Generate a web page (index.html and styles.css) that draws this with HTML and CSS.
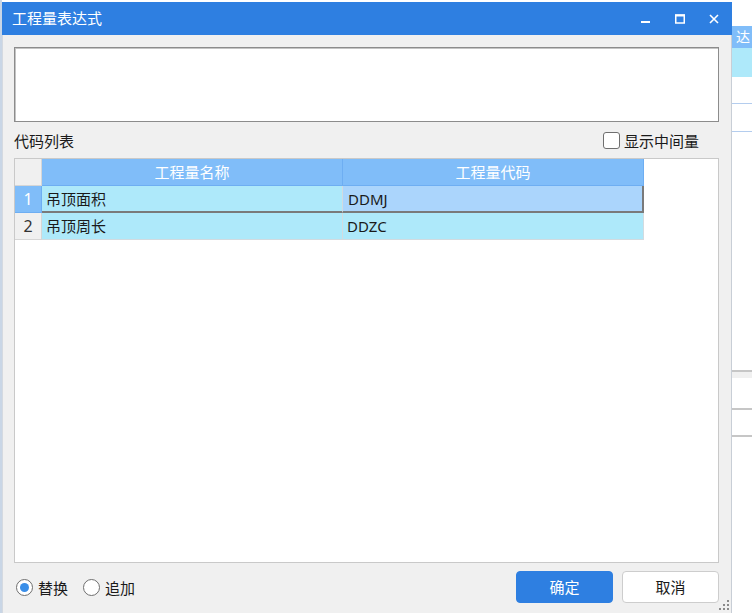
FILE: index.html
```html
<!DOCTYPE html>
<html lang="zh-CN">

<head>
    <meta charset="UTF-8">
    <title>工程量表达式</title>
    <link rel="stylesheet" href="styles.css">
</head>

<body>
    <div id="desk">
        <div id="dialog">
            <div id="titlebar">
                <div class="title">工程量表达式</div>
                <div id="controls">
                    <div class="ctl">
                        <svg width="10" height="10" viewBox="0 0 10 10"><rect x="0" y="7" width="9" height="2" fill="#fff"/></svg>
                    </div>
                    <div class="ctl">
                        <svg width="10" height="10" viewBox="0 0 10 10"><rect x="0.75" y="1" width="8.5" height="8" fill="none" stroke="#fff" stroke-width="1.5"/><rect x="0" y="0.5" width="10" height="2" fill="#fff"/></svg>
                    </div>
                    <div class="ctl">
                        <svg width="10" height="10" viewBox="0 0 10 10"><path d="M1 1 L9 9 M9 1 L1 9" stroke="#fff" stroke-width="1.6"/></svg>
                    </div>
                </div>
            </div>

            <div id="body">
                <textarea class="expr"></textarea>

                <div id="listbar">
                    <div class="label">代码列表</div>
                    <label class="check"><span class="box"></span>显示中间量</label>
                </div>

                <div id="grid">
                    <div class="table">
                        <div class="cell corner"></div>
                        <div class="cell head">工程量名称</div>
                        <div class="cell head">工程量代码</div>

                        <div class="cell num cur">1</div>
                        <div class="cell val focus">吊顶面积</div>
                        <div class="cell val focus sel">DDMJ</div>

                        <div class="cell num">2</div>
                        <div class="cell val">吊顶周长</div>
                        <div class="cell val">DDZC</div>
                    </div>
                </div>

                <div id="footer">
                    <div class="radios">
                        <label class="radio"><span class="dot on"></span>替换</label>
                        <label class="radio"><span class="dot"></span>追加</label>
                    </div>
                    <div class="buttons">
                        <div class="btn primary">确定</div>
                        <div class="btn">取消</div>
                    </div>
                </div>

                <!-- 右下角拖拽点 -->
                <svg class="grip" width="12" height="12" viewBox="0 0 12 12">
                    <rect x="9" y="1" width="2" height="2" fill="#8a8a8a"/>
                    <rect x="5" y="5" width="2" height="2" fill="#8a8a8a"/>
                    <rect x="9" y="5" width="2" height="2" fill="#8a8a8a"/>
                    <rect x="1" y="9" width="2" height="2" fill="#8a8a8a"/>
                    <rect x="5" y="9" width="2" height="2" fill="#8a8a8a"/>
                    <rect x="9" y="9" width="2" height="2" fill="#8a8a8a"/>
                </svg>
            </div>
        </div>

        <!-- 后面主窗口露出的部分 -->
        <div id="behind">
            <div class="bhead">达</div>
            <div class="bband"></div>
            <div class="bline l1"></div>
            <div class="bline l2"></div>
            <div class="bgray"></div>
            <div class="bline l3"></div>
            <div class="bline l4"></div>
        </div>
    </div>
</body>

</html>
```

FILE: styles.css
```css
* {
    margin: 0;
    padding: 0;
    box-sizing: border-box;
}

body {
    width: 752px;
    height: 613px;
    overflow: hidden;
    background-color: #fff;
    font-family: "Noto Sans", "Noto Sans CJK SC", sans-serif;
    font-size: 15px;
    color: #1a1a1a;
}

#desk {
    display: flex;
    padding-top: 2px;
    height: 613px;
    border-left: 2px solid #c9d6e6;
}

#dialog {
    width: 730px;
    height: 611px;
    display: flex;
    flex-direction: column;
    flex-shrink: 0;
}

#titlebar {
    height: 33px;
    background-color: #2e7fe1;
    display: flex;
    justify-content: space-between;
    align-items: center;
    color: #fff;
}

#titlebar .title {
    padding-left: 10px;
    line-height: 33px;
}

#controls {
    display: flex;
    height: 100%;
    padding-right: 1px;
}

.ctl {
    width: 34px;
    height: 100%;
    display: flex;
    align-items: center;
    justify-content: center;
}

#body {
    flex: 1;
    position: relative;
    display: flex;
    flex-direction: column;
    background-color: #f0f0f0;
    border-left: 1px solid #d4d9e0;
    border-right: 1px solid #c8ced6;
    padding: 12px 12px 0 11px;
}

.expr {
    display: block;
    width: 705px;
    height: 75px;
    resize: none;
    background-color: #fff;
    border: 1px solid #8c8c8c;
    box-shadow: inset 1px 1px 0 #c4c4c4;
    outline: none;
    font-family: inherit;
}

#listbar {
    height: 36px;
    display: flex;
    justify-content: space-between;
    align-items: center;
    padding-top: 1px;
    padding-right: 20px;
}

.check {
    display: flex;
    align-items: center;
}

.check .box {
    width: 17px;
    height: 17px;
    border: 1px solid #6f6f6f;
    border-radius: 3px;
    background-color: #fff;
    margin-right: 4px;
}

#grid {
    flex: 1;
    background-color: #fff;
    border: 1px solid #c9c9c9;
}

.table {
    display: grid;
    grid-template-columns: 27px 301px 301px;
    grid-auto-rows: 27px;
}

.cell {
    line-height: 26px;
    border-right: 1px solid #d2dbe0;
    border-bottom: 1px solid #d2dbe0;
    white-space: nowrap;
}

.corner {
    background-color: #f0f0f0;
    border-color: #d6d6d6;
}

.head {
    background-color: #80bdf9;
    border-color: #6eaef2;
    color: #fff;
    text-align: center;
}

.num {
    background-color: #f0f0f0;
    border-color: #d6d6d6;
    text-align: center;
    color: #333;
    font-size: 16px;
}

.num.cur {
    background-color: #80bdf9;
    border-color: #6eaef2;
    color: #fff;
}

.val {
    background-color: #aee9fa;
    padding-left: 4px;
}

.val.focus {
    border-bottom: 2px solid #7a7a7a;
}

.val.sel {
    background-color: #abd5fc;
    border-right: 2px solid #7a7a7a;
    padding-left: 5px;
}

#footer {
    height: 50px;
    display: flex;
    justify-content: space-between;
    align-items: center;
    padding-bottom: 2px;
}

.radios {
    display: flex;
    padding-left: 2px;
}

.radio {
    display: flex;
    align-items: center;
    margin-right: 15px;
}

.dot {
    width: 17px;
    height: 17px;
    border: 1px solid #6f6f6f;
    border-radius: 50%;
    background-color: #fff;
    margin-right: 5px;
    display: flex;
    align-items: center;
    justify-content: center;
}

.dot.on::after {
    content: "";
    width: 9px;
    height: 9px;
    border-radius: 50%;
    background-color: #3a8ee8;
}

.buttons {
    display: flex;
    gap: 9px;
}

.btn {
    width: 97px;
    height: 32px;
    line-height: 30px;
    text-align: center;
    background-color: #fff;
    border: 1px solid #cdcdcd;
    border-radius: 4px;
}

.btn.primary {
    background-color: #2e7fe1;
    border-color: #2e7fe1;
    color: #fff;
}

.grip {
    position: absolute;
    right: 1px;
    bottom: 2px;
}

#behind {
    flex: 1;
    background-color: #fff;
    overflow: hidden;
}

.bhead {
    margin-top: 24px;
    height: 22px;
    line-height: 22px;
    background-color: #80bdf9;
    color: #fff;
    font-size: 14px;
    padding-left: 4px;
    white-space: nowrap;
}

.bband {
    height: 29px;
    background-color: #aee9fa;
}

.bline {
    height: 1px;
    background-color: #b4cdee;
}

.l1 {
    margin-top: 26px;
}

.l2 {
    margin-top: 27px;
}

.bgray {
    margin-top: 238px;
    height: 8px;
    background-color: #f0f0f0;
    border-top: 2px solid #c6c6c6;
}

.l3 {
    margin-top: 30px;
    height: 2px;
    background-color: #c6c6c6;
}

.l4 {
    margin-top: 25px;
    height: 2px;
    background-color: #c6c6c6;
}
```
